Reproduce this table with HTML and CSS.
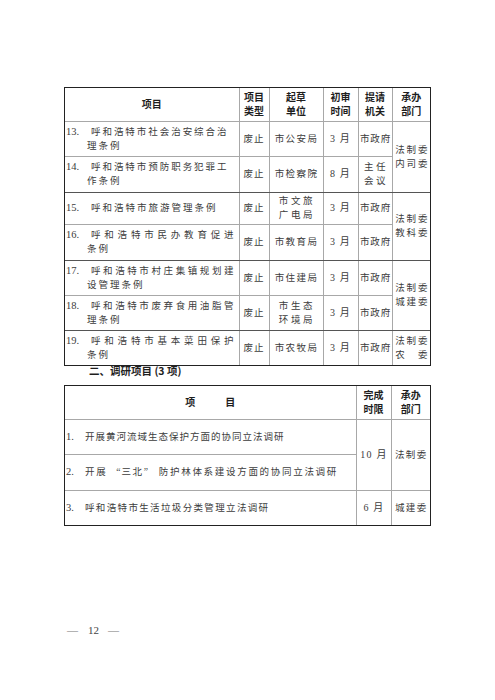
FILE: index.html
```html
<!DOCTYPE html>
<html lang="zh-CN">
<head>
<meta charset="utf-8">
<title>立法计划</title>
<link rel="stylesheet" href="styles.css">
</head>
<body>
<div class="page">
  <div class="box">
    <table class="t1">
      <colgroup><col class="a1"><col class="a2"><col class="a3"><col class="a4"><col class="a5"><col class="a6"></colgroup>
      <tr class="hd">
        <th>项目</th><th>项目<br>类型</th><th>起草<br>单位</th><th>初审<br>时间</th><th>提请<br>机关</th><th>承办<br>部门</th>
      </tr>
      <tr class="r13">
        <td class="item"><div class="l1"><span class="no">13.</span><span class="jt n">呼和浩特市社会治安综合治</span></div><div class="l2">理条例</div></td>
        <td>废止</td><td class="sp">市公安局</td><td class="mo">3 月</td><td class="gov">市政府</td>
        <td rowspan="2" class="dept gb">法制委<br>内司委</td>
      </tr>
      <tr class="r14">
        <td class="item gb"><div class="l1"><span class="no">14.</span><span class="jt n">呼和浩特市预防职务犯罪工</span></div><div class="l2">作条例</div></td>
        <td class="gb">废止</td><td class="sp gb">市检察院</td><td class="mo gb">8 月</td><td class="wide gb">主任<br>会议</td>
      </tr>
      <tr class="r15">
        <td class="item"><div class="l1"><span class="no">15.</span><span class="single">呼和浩特市旅游管理条例</span></div></td>
        <td>废止</td><td class="sp wide">市文旅<br>广电局</td><td class="mo">3 月</td><td class="gov">市政府</td>
        <td rowspan="2" class="dept gb">法制委<br>教科委</td>
      </tr>
      <tr class="r16">
        <td class="item gb"><div class="l1"><span class="no">16.</span><span class="jt">呼和浩特市民办教育促进</span></div><div class="l2">条例</div></td>
        <td class="gb">废止</td><td class="sp gb">市教育局</td><td class="mo gb">3 月</td><td class="gov gb">市政府</td>
      </tr>
      <tr class="r17">
        <td class="item"><div class="l1"><span class="no">17.</span><span class="jt">呼和浩特市村庄集镇规划建</span></div><div class="l2">设管理条例</div></td>
        <td>废止</td><td class="sp">市住建局</td><td class="mo">3 月</td><td class="gov">市政府</td>
        <td rowspan="2" class="dept gb">法制委<br>城建委</td>
      </tr>
      <tr class="r18">
        <td class="item gb"><div class="l1"><span class="no">18.</span><span class="jt">呼和浩特市废弃食用油脂管</span></div><div class="l2">理条例</div></td>
        <td class="gb">废止</td><td class="sp wide gb">市生态<br>环境局</td><td class="mo gb">3 月</td><td class="gov gb">市政府</td>
      </tr>
      <tr class="r19">
        <td class="item"><div class="l1"><span class="no">19.</span><span class="jt">呼和浩特市基本菜田保护</span></div><div class="l2">条例</div></td>
        <td>废止</td><td class="sp">市农牧局</td><td class="mo">3 月</td><td class="gov">市政府</td>
        <td class="dept">法制委<br>农　委</td>
      </tr>
    </table>
  </div>

  <div class="h2">二、调研项目 (3 项)</div>

  <div class="box">
    <table class="t2">
      <colgroup><col class="b1"><col class="b2"><col class="b3"></colgroup>
      <tr class="hd">
        <th>项<span class="gap"></span>目</th><th>完成<br>时限</th><th>承办<br>部门</th>
      </tr>
      <tr class="s1">
        <td class="task k1"><span class="no2">1.</span>开展黄河流域生态保护方面的协同立法调研</td>
        <td rowspan="2" class="sp mo">10 月</td><td rowspan="2" class="sp">法制委</td>
      </tr>
      <tr class="s2">
        <td class="task k2"><span class="no2">2.</span>开展<span class="qo">“</span>三北<span class="qc">”</span>防护林体系建设方面的协同立法调研</td>
      </tr>
      <tr class="s3">
        <td class="task k3"><span class="no2">3.</span>呼和浩特市生活垃圾分类管理立法调研</td>
        <td class="sp mo">6 月</td><td class="sp">城建委</td>
      </tr>
    </table>
  </div>

  <div class="pno"><span class="dash">—</span><span class="num">12</span><span class="dash">—</span></div>
</div>
</body>
</html>
```

FILE: styles.css
```css
html, body {
  margin: 0;
  padding: 0;
  background: #ffffff;
}

body {
  font-family: "Liberation Serif", "Noto Sans CJK SC", serif;
  color: #3c3c3c;
}

.page {
  padding: 87px 0 0 64px;
}

.box {
  width: 365px;
  border: 1px solid #222222;
}

table {
  border-collapse: collapse;
  border-style: hidden;
  table-layout: fixed;
  width: 365px;
}

.a1 { width: 174px; }
.a2 { width: 30px; }
.a3 { width: 54px; }
.a4 { width: 35px; }
.a5 { width: 34px; }
.a6 { width: 38px; }

.b1 { width: 291px; }
.b2 { width: 35px; }
.b3 { width: 39px; }

th, td {
  border: 1px solid #a8a8a8;
  padding: 0;
  text-align: center;
  vertical-align: middle;
  white-space: nowrap;
}

th {
  font-family: "Noto Sans CJK SC", sans-serif;
  font-weight: 700;
  font-size: 10px;
  line-height: 14px;
  color: #1e1e1e;
}

td {
  font-size: 9.5px;
  line-height: 14px;
  letter-spacing: 1px;
}

td.gb {
  border-bottom-color: #555555;
}

td.mo {
  font-size: 10px;
  letter-spacing: 1.2px;
}

.t1 .hd { height: 33px; }
.r13 { height: 35px; }
.r14 { height: 36px; }
.r15 { height: 32px; }
.r16 { height: 36px; }
.r17 { height: 35px; }
.r18 { height: 35px; }
.r19 { height: 35px; }

.item {
  text-align: left;
  padding-left: 1px;
}

.l1 {
  display: flex;
}

.no {
  width: 25px;
  flex: none;
  letter-spacing: 0;
  font-size: 10.5px;
}

.jt {
  flex: 1;
  text-align: justify;
  text-align-last: justify;
  letter-spacing: 0;
  padding-right: 5px;
}

.jt.n {
  padding-right: 12px;
}

.single {
  letter-spacing: 2px;
}

.l2 {
  padding-left: 21px;
  letter-spacing: 2px;
}

.sp {
  letter-spacing: 1.4px;
  padding-left: 1px;
}

.gov {
  letter-spacing: 0.8px;
  padding-left: 1px;
}

.wide {
  letter-spacing: 2.6px;
  padding-left: 2px;
}

.dept {
  letter-spacing: 1.8px;
  padding-left: 2px;
  line-height: 14px;
}

.h2 {
  height: 19px;
  box-sizing: border-box;
  padding-left: 25px;
  font-family: "Noto Sans CJK SC", sans-serif;
  font-weight: 700;
  font-size: 10.5px;
  line-height: 10px;
  color: #1e1e1e;
}

.t2 .hd { height: 33px; }
.s1 { height: 35px; }
.s2 { height: 36px; }
.s3 { height: 35px; }

.gap {
  display: inline-block;
  width: 30px;
}

.task {
  text-align: left;
  padding-left: 1px;
}

.task.k1 { letter-spacing: 1px; }
.task.k2 { letter-spacing: 1.7px; }
.task.k3 { letter-spacing: 1.35px; }

.no2 {
  display: inline-block;
  width: 19px;
  letter-spacing: 0;
  font-size: 10.5px;
}

.qo, .qc {
  display: inline-block;
  width: 13px;
  letter-spacing: 0;
}

.qo {
  text-align: right;
  padding-right: 1px;
}

.qc {
  text-align: left;
  margin-right: 2px;
}

.pno {
  margin-top: 97px;
  padding-left: 3px;
  font-size: 11px;
  line-height: 14px;
  color: #444444;
}

.dash {
  color: #777777;
}

.num {
  margin: 0 9px 0 10px;
}
```
